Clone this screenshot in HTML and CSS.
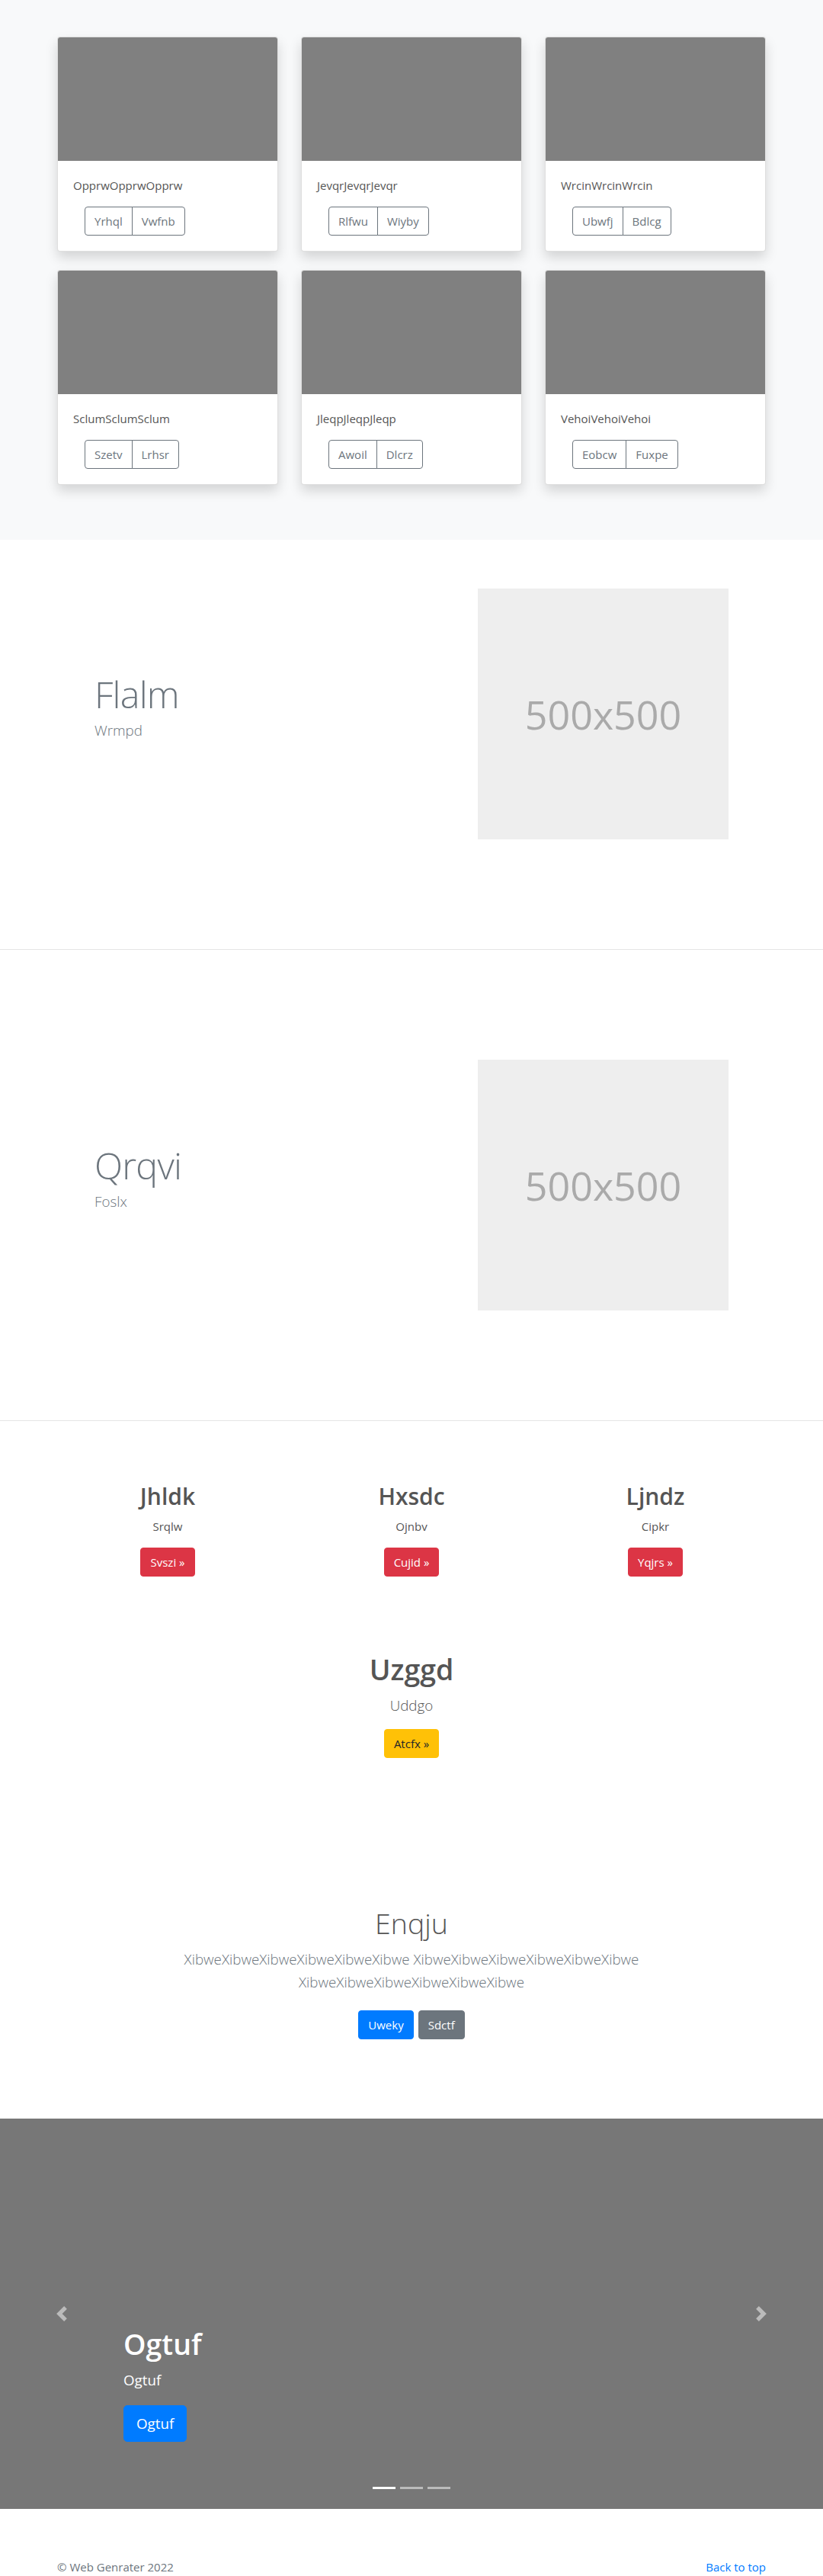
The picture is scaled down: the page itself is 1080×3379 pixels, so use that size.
FILE: index.html
```html
<!DOCTYPE html>
<html lang="en">
<head>
<meta charset="utf-8">
<title>Web Genrater</title>
<link rel="stylesheet" href="styles.css">
</head>
<body>
<section class="album">
  <div class="album-grid">
    <div class="card">
      <div class="thumb"></div>
      <div class="card-body">
        <p class="card-text">OpprwOpprwOpprw</p>
        <div class="btn-group"><button class="btn btn-outline">Yrhql</button><button class="btn btn-outline">Vwfnb</button></div>
      </div>
    </div>
    <div class="card">
      <div class="thumb"></div>
      <div class="card-body">
        <p class="card-text">JevqrJevqrJevqr</p>
        <div class="btn-group"><button class="btn btn-outline">Rlfwu</button><button class="btn btn-outline">Wiyby</button></div>
      </div>
    </div>
    <div class="card">
      <div class="thumb"></div>
      <div class="card-body">
        <p class="card-text">WrcinWrcinWrcin</p>
        <div class="btn-group"><button class="btn btn-outline">Ubwfj</button><button class="btn btn-outline">Bdlcg</button></div>
      </div>
    </div>
    <div class="card">
      <div class="thumb"></div>
      <div class="card-body">
        <p class="card-text">SclumSclumSclum</p>
        <div class="btn-group"><button class="btn btn-outline">Szetv</button><button class="btn btn-outline">Lrhsr</button></div>
      </div>
    </div>
    <div class="card">
      <div class="thumb"></div>
      <div class="card-body">
        <p class="card-text">JleqpJleqpJleqp</p>
        <div class="btn-group"><button class="btn btn-outline">Awoil</button><button class="btn btn-outline">Dlcrz</button></div>
      </div>
    </div>
    <div class="card">
      <div class="thumb"></div>
      <div class="card-body">
        <p class="card-text">VehoiVehoiVehoi</p>
        <div class="btn-group"><button class="btn btn-outline">Eobcw</button><button class="btn btn-outline">Fuxpe</button></div>
      </div>
    </div>
  </div>
</section>

<section class="feature">
  <div class="feature-inner">
    <div class="feature-text">
      <h2 class="feature-heading">Flalm</h2>
      <p class="lead feature-lead">Wrmpd</p>
    </div>
    <div class="placeholder">500x500</div>
  </div>
</section>
<hr class="divider">
<section class="feature">
  <div class="feature-inner">
    <div class="feature-text">
      <h2 class="feature-heading">Qrqvi</h2>
      <p class="lead feature-lead">Foslx</p>
    </div>
    <div class="placeholder">500x500</div>
  </div>
</section>
<hr class="divider">

<section class="marketing">
  <div class="marketing-row">
    <div class="m-col">
      <h2 class="m-title">Jhldk</h2>
      <p class="m-text">Srqlw</p>
      <div class="m-action"><a class="btn btn-danger" href="#">Svszi &raquo;</a></div>
    </div>
    <div class="m-col">
      <h2 class="m-title">Hxsdc</h2>
      <p class="m-text">Ojnbv</p>
      <div class="m-action"><a class="btn btn-danger" href="#">Cujid &raquo;</a></div>
    </div>
    <div class="m-col">
      <h2 class="m-title">Ljndz</h2>
      <p class="m-text">Cipkr</p>
      <div class="m-action"><a class="btn btn-danger" href="#">Yqjrs &raquo;</a></div>
    </div>
  </div>
  <div class="marketing-row single">
    <div class="m-col">
      <h1 class="m-title-lg">Uzggd</h1>
      <p class="lead m-lead">Uddgo</p>
      <div class="m-action"><a class="btn btn-warning" href="#">Atcfx &raquo;</a></div>
    </div>
  </div>
</section>

<section class="jumbo">
  <h1 class="jumbo-title">Enqju</h1>
  <p class="lead jumbo-lead">XibweXibweXibweXibweXibweXibwe XibweXibweXibweXibweXibweXibwe XibweXibweXibweXibweXibweXibwe</p>
  <div class="jumbo-actions">
    <a class="btn btn-primary" href="#">Uweky</a>
    <a class="btn btn-secondary" href="#">Sdctf</a>
  </div>
</section>

<section class="carousel">
  <ol class="indicators"><li class="active"></li><li></li><li></li></ol>
  <div class="caption">
    <h1 class="caption-title">Ogtuf</h1>
    <p class="caption-text">Ogtuf</p>
    <div class="caption-actions"><a class="btn btn-lg btn-primary" href="#">Ogtuf</a></div>
  </div>
  <a class="ctrl prev" href="#"><svg viewBox="0 0 8 8" aria-hidden="true"><path d="M5.25 0l-4 4 4 4 1.5-1.5L4.25 4l2.5-2.5L5.25 0z" fill="#fff"/></svg></a>
  <a class="ctrl next" href="#"><svg viewBox="0 0 8 8" aria-hidden="true"><path d="M2.75 0l-1.5 1.5L3.75 4l-2.5 2.5L2.75 8l4-4-4-4z" fill="#fff"/></svg></a>
</section>

<footer class="footer">
  <div class="footer-inner">
    <p class="copy">&copy; Web Genrater 2022</p>
    <a class="back" href="#">Back to top</a>
  </div>
</footer>
</body>
</html>
```
FILE: styles.css
```css
* { box-sizing: border-box; }
html { scrollbar-width: none; }
html::-webkit-scrollbar { display: none; }
body {
  margin: 0;
  font-family: "Open Sans", "Noto Sans", sans-serif;
  font-size: 15px;
  line-height: 24px;
  color: #555;
  background: #fff;
}
p, h1, h2 { margin: 0; }

/* buttons */
.btn {
  display: inline-block;
  font-family: inherit;
  font-size: 15px;
  line-height: 24px;
  font-weight: 400;
  padding: 6px 12px;
  border: 1px solid transparent;
  border-radius: 4px;
  text-decoration: none;
  text-align: center;
  background: none;
  cursor: pointer;
  white-space: nowrap;
}
.btn-outline { color: #6c757d; border-color: #6c757d; background: transparent; }
.btn-danger { background: #dc3545; border-color: #dc3545; color: #fff; }
.btn-warning { background: #ffc107; border-color: #ffc107; color: #212529; }
.btn-primary { background: #007bff; border-color: #007bff; color: #fff; }
.btn-secondary { background: #6c757d; border-color: #6c757d; color: #fff; }
.btn-lg { font-size: 18.75px; line-height: 30px; padding: 8px 16px; border-radius: 5px; }

/* album */
.album { background: #f8f9fa; padding: 48px 0 72px; }
.album-grid {
  width: 930px;
  margin: 0 auto;
  display: grid;
  grid-template-columns: repeat(3, 290px);
  column-gap: 30px;
  row-gap: 24px;
}
.card {
  background: #fff;
  border: 1px solid rgba(0, 0, 0, .125);
  border-radius: 4px;
  box-shadow: 0 8px 16px rgba(0, 0, 0, .15);
  overflow: hidden;
}
.thumb { height: 162px; background: #808080; }
.card-body { padding: 20px; }
.card-text { margin-bottom: 16px; }
.btn-group { display: inline-flex; margin-left: 15px; }
.btn-group .btn:first-child { border-radius: 4px 0 0 4px; }
.btn-group .btn:last-child { border-radius: 0 4px 4px 0; margin-left: -1px; }

/* features */
.feature { padding: 64px 0; }
.feature-inner {
  width: 832px;
  margin: 0 auto;
  display: grid;
  grid-template-columns: 1fr 1fr;
  column-gap: 30px;
  align-items: center;
}
.feature-heading {
  font-size: 48.5px;
  line-height: 50px;
  font-weight: 300;
  letter-spacing: -0.8px;
  color: #6c757d;
  margin-bottom: 8px;
}
.lead { font-size: 18.75px; line-height: 30px; font-weight: 300; }
.feature-lead { color: #6c757d; margin-bottom: 16px; }
.placeholder {
  justify-self: end;
  width: 329px;
  height: 329px;
  background: #eee;
  color: #aaa;
  display: flex;
  align-items: center;
  justify-content: center;
  font-size: 52px;
}
.divider {
  margin: 80px 0;
  border: 0;
  border-top: 1px solid rgba(0, 0, 0, .1);
  height: 0;
}

/* marketing */
.marketing { width: 960px; margin: 0 auto; padding-bottom: 143px; }
.marketing-row {
  display: grid;
  grid-template-columns: repeat(3, 320px);
  text-align: center;
}
.marketing-row.single {
  grid-template-columns: 320px;
  justify-content: center;
  margin-top: 98px;
}
.m-title { font-size: 30px; line-height: 38px; font-weight: 600; margin-bottom: 8px; }
.m-text { margin-bottom: 16px; }
.m-title-lg { font-size: 37.5px; line-height: 48px; font-weight: 600; margin-bottom: 8px; }
.m-lead { margin-bottom: 16px; }
.m-action { display: flex; justify-content: center; }

/* jumbotron */
.jumbo { padding: 50px 0 104px; text-align: center; }
.jumbo-title { font-size: 37.5px; line-height: 48px; font-weight: 300; margin-bottom: 8px; }
.jumbo-lead { max-width: 620px; margin: 0 auto 22px; color: #6c757d; }
.jumbo-actions { display: flex; justify-content: center; gap: 6px; }

/* carousel */
.carousel { position: relative; height: 512px; background: #777; overflow: hidden; }
.ctrl {
  position: absolute;
  top: 0;
  bottom: 0;
  width: 15%;
  display: flex;
  align-items: center;
  justify-content: center;
  opacity: .5;
}
.ctrl.prev { left: 0; }
.ctrl.next { right: 0; }
.ctrl svg { width: 20px; height: 20px; display: block; }
.indicators {
  position: absolute;
  left: 0;
  right: 0;
  bottom: 26px;
  display: flex;
  justify-content: center;
  gap: 6px;
  margin: 0;
  padding: 0;
  list-style: none;
}
.indicators li { width: 30px; height: 3px; background: rgba(255, 255, 255, .5); }
.indicators li.active { background: #fff; }
.caption { position: absolute; left: 15%; right: 15%; bottom: 88px; color: #fff; }
.caption-title { font-size: 37.5px; line-height: 48px; font-weight: 600; margin-bottom: 8px; }
.caption-text { font-size: 18.75px; line-height: 30px; }
.caption-actions { display: flex; padding-top: 18px; }

/* footer */
.footer { padding-top: 64px; }
.footer-inner {
  width: 930px;
  margin: 0 auto;
  display: flex;
  justify-content: space-between;
  color: #6c757d;
}
.back { color: #007bff; text-decoration: none; }
```
